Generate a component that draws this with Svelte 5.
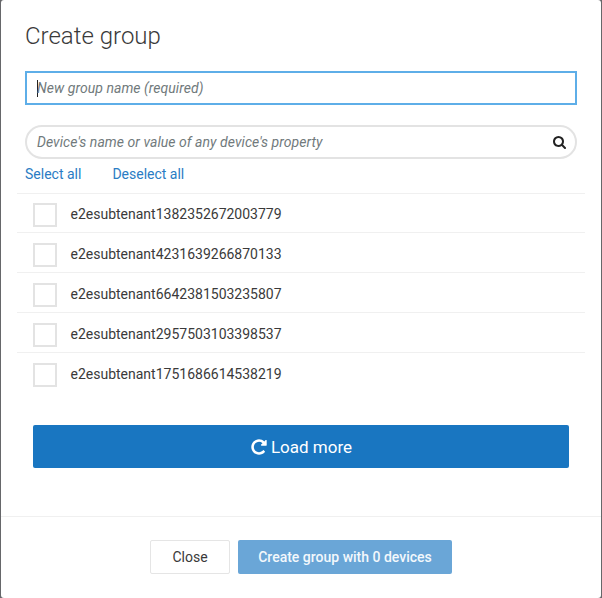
<script>
  const devices = [
    'e2esubtenant1382352672003779',
    'e2esubtenant4231639266870133',
    'e2esubtenant6642381503235807',
    'e2esubtenant2957503103398537',
    'e2esubtenant1751686614538219'
  ];
</script>

<div class="backdrop">
  <div class="modal">
    <main>
      <h1>Create group</h1>
      <div class="field name"><span class="caret"></span><span>New group name (required)</span></div>
      <div class="field search">
        <span>Device's name or value of any device's property</span>
        <svg width="13" height="14" viewBox="0 0 1664 1792"><path d="M1152 832q0-185-131.500-316.500t-316.500-131.500-316.500 131.500-131.500 316.500 131.500 316.500 316.500 131.500 316.500-131.500 131.500-316.500zm512 832q0 52-38 90t-90 38q-54 0-90-38l-343-342q-179 124-399 124-143 0-273.500-55.500t-225-150-150-225-55.500-273.500 55.500-273.500 150-225 225-150 273.500-55.500 273.500 55.500 225 150 150 225 55.500 273.500q0 220-124 399l343 343q37 37 37 90z" /></svg>
      </div>
      <nav><a href="#all">Select all</a><a href="#none">Deselect all</a></nav>
      <ul>
        {#each devices as device}
          <li><span class="box"></span><span class="label">{device}</span></li>
        {/each}
      </ul>
      <button class="more">
        <svg width="18" height="18" viewBox="0 0 1792 1792"><path d="M1664 256v448q0 26-19 45t-45 19h-448q-42 0-59-40-17-39 14-69l138-138q-148-137-349-137-104 0-198.500 40.500t-163.500 109.500-109.500 163.500-40.500 198.500 40.500 198.500 109.500 163.500 163.500 109.500 198.500 40.500q119 0 225-52t179-147q7-10 23-12 15 0 25 9l137 138q9 8 9.500 20.500t-7.500 22.500q-109 132-264 204.500t-327 72.500q-156 0-298-61t-245-164-164-245-61-298 61-298 164-245 245-164 298-61q147 0 284.500 55.500t244.500 156.500l130-129q29-31 70-14 39 17 39 59z" /></svg>
        <span>Load more</span>
      </button>
    </main>
    <footer>
      <button class="close">Close</button>
      <button class="create">Create group with 0 devices</button>
    </footer>
  </div>
</div>

<style>
  :global(body) { overflow: hidden; }
  * { box-sizing: border-box; }
  .backdrop {
    width: 602px;
    height: 598px;
    padding: 0 1px;
    background: #66676a;
    font: 14px/20px Roboto, sans-serif;
    color: #3a3a3a;
  }
  .modal {
    height: 598px;
    background: #fff;
    border-radius: 3px;
    display: flex;
    flex-direction: column;
  }
  main { height: 516px; padding: 20px 24px 0; }
  h1 {
    margin: 0 0 19px;
    height: 32px;
    font-size: 24px;
    line-height: 32px;
    font-weight: 300;
  }
  .field {
    height: 34px;
    display: flex;
    align-items: center;
    padding: 0 10px;
    border: 2px solid #e3e3e3;
    font-style: italic;
    letter-spacing: 0.05px;
    color: #717a7c;
  }
  .name { border-color: #5eaee8; margin-bottom: 20px; }
  .caret { width: 1px; height: 17px; margin-right: -1px; background: #222; }
  .search { border-radius: 17px; justify-content: space-between; padding-right: 9px; }
  .search svg { fill: #222; }
  nav { display: flex; gap: 31px; height: 34px; padding-top: 5px; }
  a { color: #2a7cc4; text-decoration: none; }
  ul { list-style: none; margin: 0 -8px; padding: 0; }
  li {
    height: 40px;
    display: flex;
    align-items: flex-start;
    gap: 13.5px;
    padding: 9px 0 0 16px;
    border-top: 1px solid #f0f0f0;
  }
  li + li { padding-top: 10px; }
  li:first-child { height: 39px; }
  .box { width: 24px; height: 24px; border: 2px solid #e3e3e3; }
  .label { margin-top: 1px; }
  li + li .label { margin-top: 1px; }
  button { font: inherit; padding: 0; cursor: pointer; }
  .more {
    width: 536px;
    height: 43px;
    margin: 33px 8px 0;
    display: flex;
    align-items: center;
    justify-content: center;
    gap: 3px;
    border: 0;
    border-radius: 2px;
    background: #1976c1;
    color: #fff;
    font-size: 17px;
  }
  .more svg { fill: #fff; }
  footer {
    flex: 1;
    display: flex;
    justify-content: center;
    gap: 8px;
    padding-top: 23px;
    border-top: 1px solid #f0f0f0;
  }
  footer button { height: 34px; border-radius: 2px; padding-bottom: 1px; }
  .close { width: 80px; border: 1px solid #e5e5e5; background: #fff; color: #3a3a3a; }
  .create { width: 214px; border: 0; background: #6aa6d7; color: #f3f8fc; font-weight: 500; }
</style>
